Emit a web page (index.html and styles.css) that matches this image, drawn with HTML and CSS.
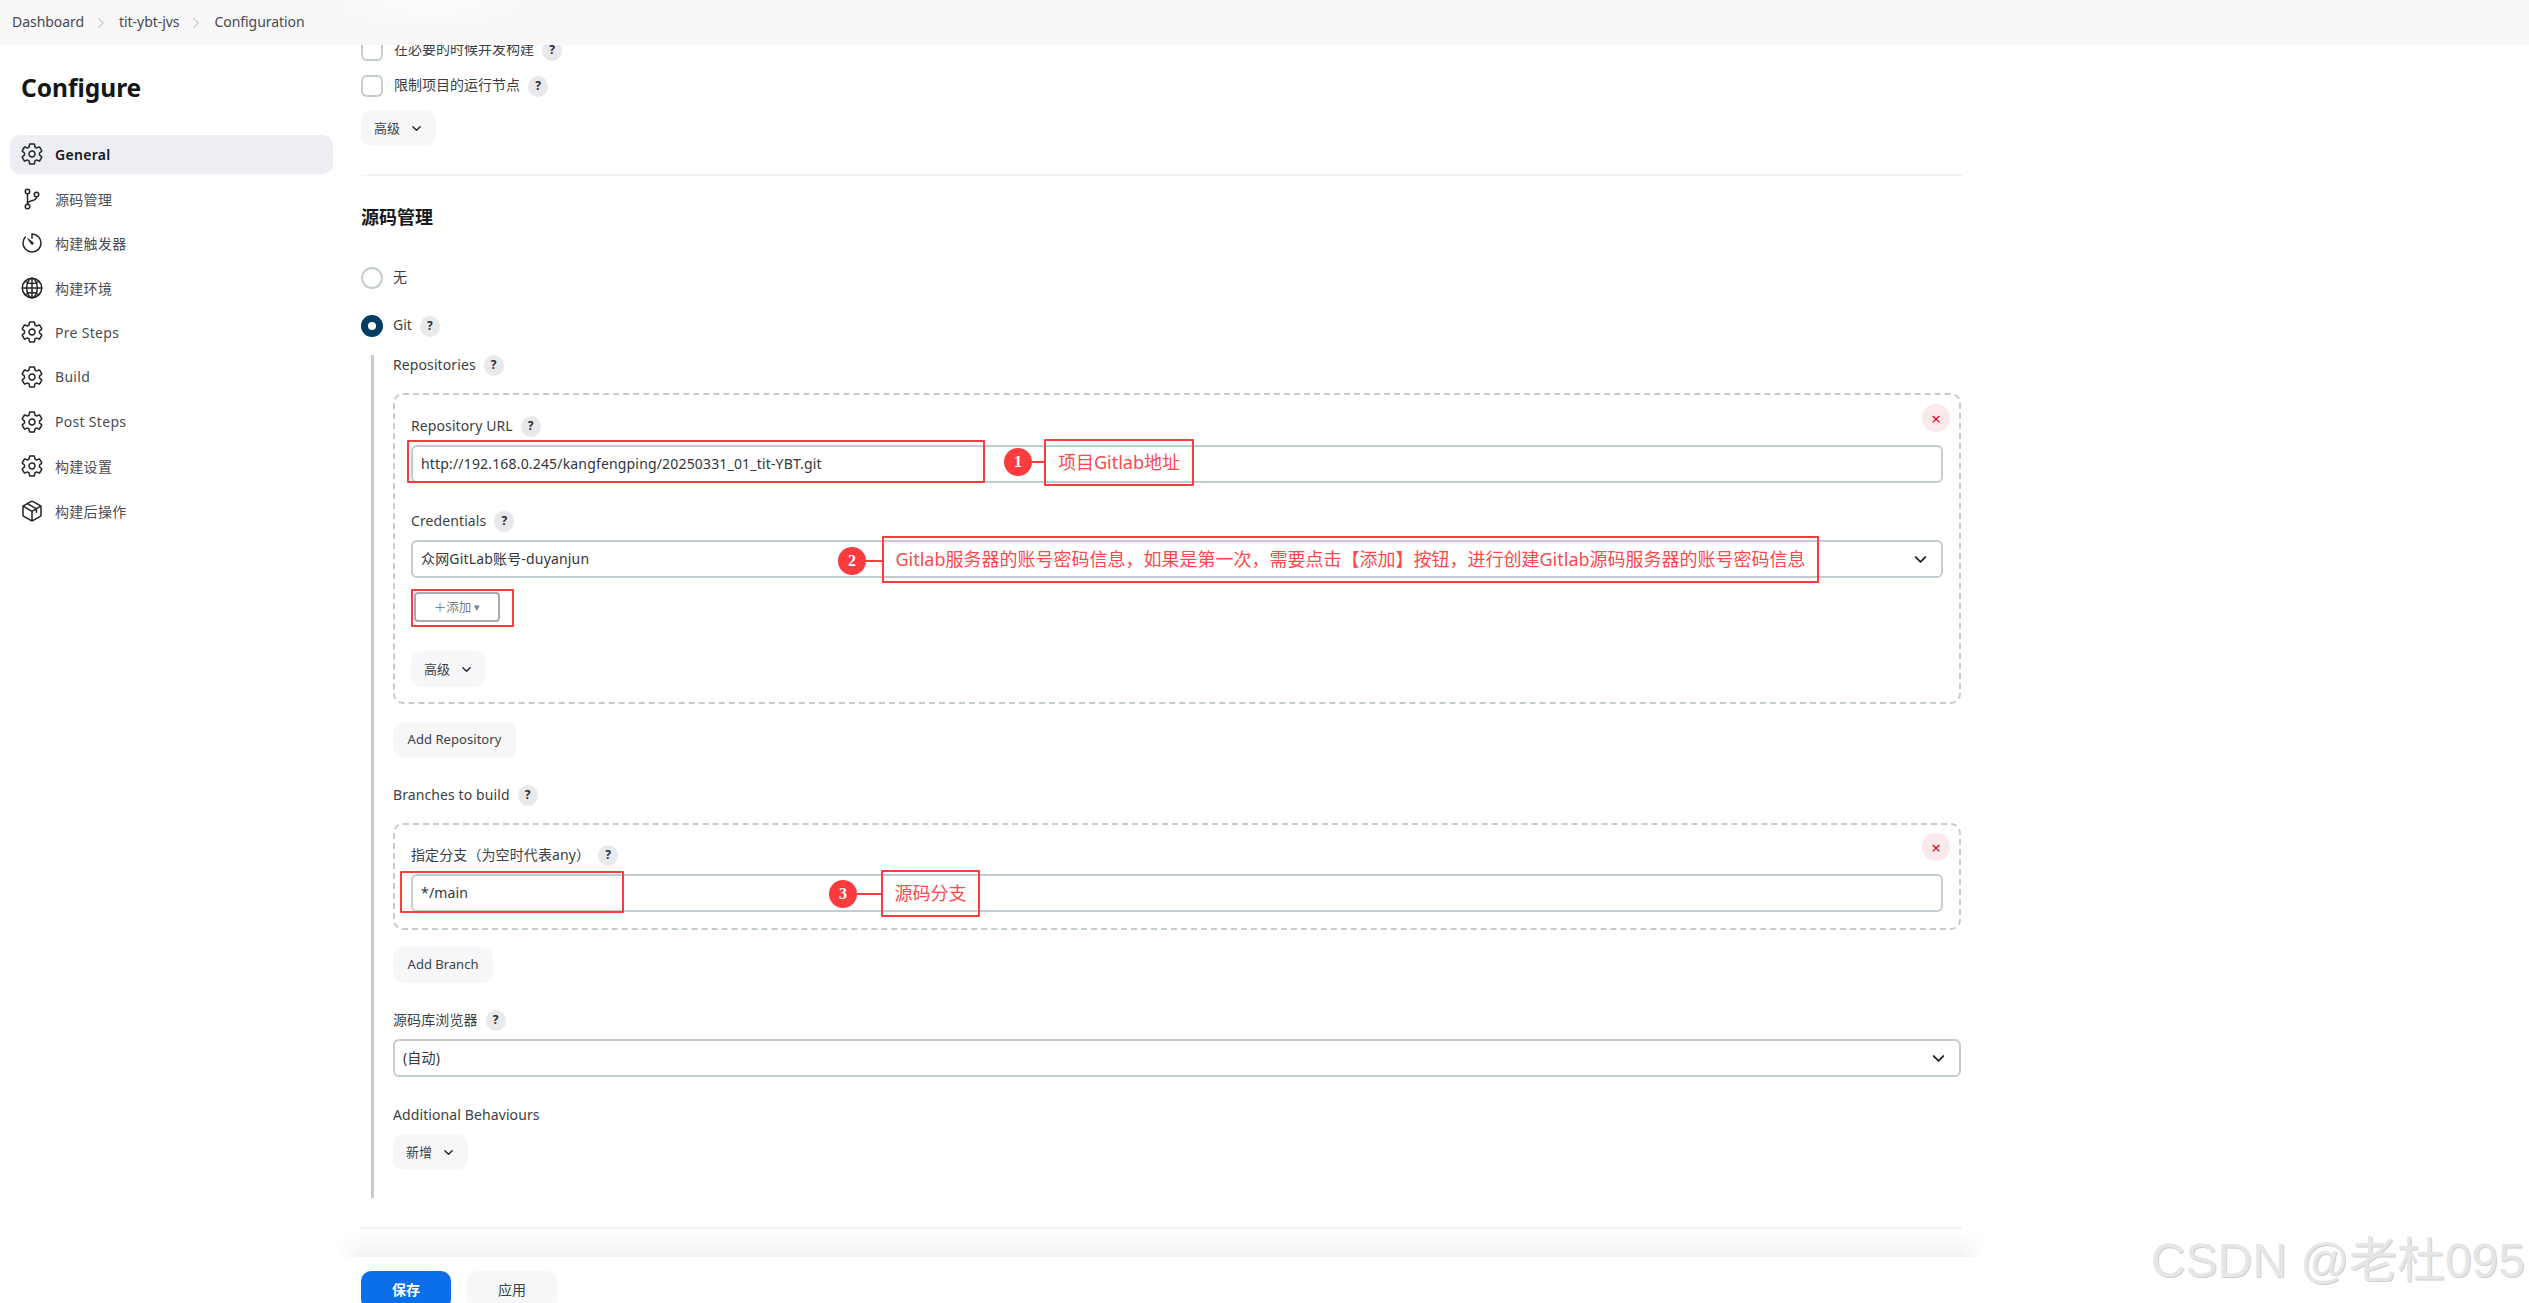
FILE: index.html
```html
<!DOCTYPE html>
<html lang="zh-CN">
<head>
<meta charset="utf-8">
<title>Configuration</title>
<link rel="stylesheet" href="styles.css">
</head>
<body>
<svg class="defs" aria-hidden="true">
  <symbol id="i-gear" viewBox="0 0 512 512"><path fill="none" stroke="currentColor" stroke-width="32" stroke-linecap="round" stroke-linejoin="round" d="M262.29 192.31a64 64 0 1057.4 57.4 64.13 64.13 0 00-57.4-57.4zM416.39 256a154.34 154.34 0 01-1.53 20.79l45.21 35.46a10.81 10.81 0 012.45 13.75l-42.77 74a10.81 10.81 0 01-13.14 4.59l-44.9-18.08a16.11 16.11 0 00-15.17 1.75A164.48 164.48 0 01325 400.8a15.94 15.94 0 00-8.82 12.14l-6.73 47.89a11.08 11.08 0 01-10.68 9.17h-85.54a11.11 11.11 0 01-10.69-8.87l-6.72-47.82a16.07 16.07 0 00-9-12.22 155.3 155.3 0 01-21.46-12.57 16 16 0 00-15.11-1.71l-44.89 18.07a10.81 10.81 0 01-13.14-4.58l-42.77-74a10.8 10.8 0 012.45-13.75l38.21-30a16.05 16.05 0 006-14.08c-.36-4.17-.58-8.33-.58-12.5s.21-8.27.58-12.35a16 16 0 00-6.07-13.94l-38.19-30A10.81 10.81 0 0149.48 186l42.77-74a10.81 10.81 0 0113.14-4.59l44.9 18.08a16.11 16.11 0 0015.17-1.75A164.48 164.48 0 01187 111.2a15.94 15.94 0 008.82-12.14l6.73-47.89A11.08 11.08 0 01213.23 42h85.54a11.11 11.11 0 0110.69 8.87l6.72 47.82a16.07 16.07 0 009 12.22 155.3 155.3 0 0121.46 12.57 16 16 0 0015.11 1.71l44.89-18.07a10.81 10.81 0 0113.14 4.58l42.77 74a10.8 10.8 0 01-2.45 13.75l-38.21 30a16.05 16.05 0 00-6.05 14.08c.33 4.14.55 8.3.55 12.47z"/></symbol>
  <symbol id="i-branch" viewBox="0 0 512 512"><g fill="none" stroke="currentColor" stroke-width="32" stroke-linecap="round" stroke-linejoin="round"><circle cx="160" cy="96" r="48"/><circle cx="160" cy="416" r="48"/><path d="M160 368V144"/><circle cx="352" cy="160" r="48"/><path d="M352 208c0 128-192 48-192 160"/></g></symbol>
  <symbol id="i-timer" viewBox="0 0 512 512"><path fill="none" stroke="currentColor" stroke-width="32" stroke-linecap="round" stroke-linejoin="round" d="M112.91 128A191.85 191.85 0 0064 254c-1.18 106.35 85.65 193.8 192 194 106.2.2 192-85.83 192-192 0-104.54-83.55-189.61-187.5-192a4.36 4.36 0 00-4.5 4.37V152"/><path fill="currentColor" d="M233.38 278.63l-79-113a8.13 8.13 0 0111.32-11.32l113 79a32.5 32.5 0 01-37 53.34 33.21 33.21 0 01-8.32-8.02z"/></symbol>
  <symbol id="i-globe" viewBox="0 0 512 512"><g fill="none" stroke="currentColor" stroke-width="32" stroke-linecap="round" stroke-linejoin="round"><path d="M256 48C141.13 48 48 141.13 48 256s93.13 208 208 208 208-93.13 208-208S370.87 48 256 48z"/><path d="M256 48c-58.07 0-112.67 92.47-112.67 208S197.93 464 256 464s112.67-92.47 112.67-208S314.07 48 256 48z"/><path d="M117.33 117.33c38.24 27.15 86.38 43.34 138.67 43.34s100.43-16.19 138.67-43.34M394.67 394.67c-38.24-27.15-86.38-43.34-138.67-43.34s-100.43 16.19-138.67 43.34M256 48v416M464 256H48"/></g></symbol>
  <symbol id="i-box" viewBox="0 0 512 512"><g fill="none" stroke="currentColor" stroke-width="32" stroke-linecap="round" stroke-linejoin="round"><path d="M448 341.37V170.61A32 32 0 00432.11 143l-152-88.46a47.94 47.94 0 00-48.24 0L79.89 143A32 32 0 0064 170.61v170.76A32 32 0 0079.89 369l152 88.46a48 48 0 0048.24 0l152-88.46A32 32 0 00448 341.37z"/><path d="M69 153.99l187 110 187-110M256 463.99v-200M160 97l190 112v72"/></g></symbol>
  <symbol id="i-chev" viewBox="0 0 512 512"><path fill="none" stroke="currentColor" stroke-width="56" stroke-linecap="round" stroke-linejoin="round" d="M112 184l144 144 144-144"/></symbol>
  <symbol id="i-bc" viewBox="0 0 512 512"><path fill="none" stroke="currentColor" stroke-width="26" stroke-linecap="round" stroke-linejoin="round" d="M184 112l144 144-144 144"/></symbol>
</svg>

<header class="topbar">
  <span class="crumb">Dashboard</span>
  <svg class="crumb-sep"><use href="#i-bc"/></svg>
  <span class="crumb">tit-ybt-jvs</span>
  <svg class="crumb-sep"><use href="#i-bc"/></svg>
  <span class="crumb">Configuration</span>
</header>

<div class="layout">
  <aside class="sidebar">
    <h1 class="title">Configure</h1>
    <nav class="nav">
      <a class="nav-item active"><svg class="nav-icon"><use href="#i-gear"/></svg><span>General</span></a>
      <a class="nav-item"><svg class="nav-icon"><use href="#i-branch"/></svg><span>源码管理</span></a>
      <a class="nav-item"><svg class="nav-icon"><use href="#i-timer"/></svg><span>构建触发器</span></a>
      <a class="nav-item"><svg class="nav-icon"><use href="#i-globe"/></svg><span>构建环境</span></a>
      <a class="nav-item"><svg class="nav-icon"><use href="#i-gear"/></svg><span>Pre Steps</span></a>
      <a class="nav-item"><svg class="nav-icon"><use href="#i-gear"/></svg><span>Build</span></a>
      <a class="nav-item"><svg class="nav-icon"><use href="#i-gear"/></svg><span>Post Steps</span></a>
      <a class="nav-item"><svg class="nav-icon"><use href="#i-gear"/></svg><span>构建设置</span></a>
      <a class="nav-item"><svg class="nav-icon"><use href="#i-box"/></svg><span>构建后操作</span></a>
    </nav>
  </aside>

  <main class="main">
    <div class="check-row"><span class="checkbox"></span><span class="label">在必要的时候并发构建</span><span class="help">?</span></div>
    <div class="check-row second"><span class="checkbox"></span><span class="label">限制项目的运行节点</span><span class="help">?</span></div>
    <button class="btn btn-menu adv-first">高级<svg class="chev"><use href="#i-chev"/></svg></button>
    <hr class="divider first-divider">
    <h2 class="section-title">源码管理</h2>

    <div class="radio-row none"><span class="radio"></span><span class="label">无</span></div>
    <div class="radio-row git"><span class="radio on"></span><span class="label">Git</span><span class="help">?</span></div>

    <div class="git-sub">
      <div class="field-label"><span>Repositories</span><span class="help">?</span></div>
      <div class="dashed repo-box">
        <span class="close repo-close">×</span>
        <div class="field-label"><span>Repository URL</span><span class="help">?</span></div>
        <div class="input gap-s">http://192.168.0.245/kangfengping/20250331_01_tit-YBT.git</div>
        <div class="field-label gap-l"><span>Credentials</span><span class="help">?</span></div>
        <div class="input select gap-s">众网GitLab账号-duyanjun<svg class="select-chev"><use href="#i-chev"/></svg></div>
        <button class="add-btn">＋添加 <span class="caret">▾</span></button>
        <button class="btn btn-menu adv-second">高级<svg class="chev"><use href="#i-chev"/></svg></button>
      </div>
      <button class="btn btn-plain add-repo">Add Repository</button>

      <div class="field-label branches-label"><span>Branches to build</span><span class="help">?</span></div>
      <div class="dashed branch-box">
        <span class="close branch-close">×</span>
        <div class="field-label"><span>指定分支（为空时代表any）</span><span class="help">?</span></div>
        <div class="input gap-s">*/main</div>
      </div>
      <button class="btn btn-plain add-branch">Add Branch</button>

      <div class="field-label gap-ll"><span>源码库浏览器</span><span class="help">?</span></div>
      <div class="input select browser">(自动)<svg class="select-chev"><use href="#i-chev"/></svg></div>
      <div class="field-label gap-l"><span>Additional Behaviours</span></div>
      <button class="btn btn-menu add-new">新增<svg class="chev"><use href="#i-chev"/></svg></button>
    </div>

    <hr class="divider last-divider">
    <div class="shade"></div>
    <footer class="actions">
      <button class="btn btn-save">保存</button>
      <button class="btn btn-apply">应用</button>
    </footer>
  </main>
</div>

<div class="notes">
  <div class="mark mark-url"></div>
  <span class="num num1">1</span><span class="tie tie1"></span>
  <div class="note note1">项目Gitlab地址</div>
  <span class="num num2">2</span><span class="tie tie2"></span>
  <div class="note note2">Gitlab服务器的账号密码信息，如果是第一次，需要点击【添加】按钮，进行创建Gitlab源码服务器的账号密码信息</div>
  <div class="mark mark-add"></div>
  <div class="mark mark-main"></div>
  <span class="num num3">3</span><span class="tie tie3"></span>
  <div class="note note3">源码分支</div>
</div>

<div class="watermark">CSDN @老杜095</div>
</body>
</html>
```

FILE: styles.css
```css
* { box-sizing: border-box; }
html, body { margin: 0; height: 1303px; overflow: hidden; background: #fff; }
body {
  position: relative;
  font-family: "Noto Sans", "Noto Sans CJK SC", sans-serif;
  font-size: 14px;
  color: #3c3f46;
}
.defs { position: absolute; width: 0; height: 0; }

.topbar {
  position: absolute; top: 0; left: 0; right: 0; z-index: 5;
  height: 45px;
  display: flex; align-items: center;
  padding: 0 0 0 12px;
  background: radial-gradient(ellipse 90px 24px at 430px 0, #fdfdfd, #f8f8f9 100%);
}
.crumb { font-size: 14px; line-height: 20px; color: #46494f; padding-bottom: 2px; letter-spacing: -.05px; }
.crumb-sep { width: 16px; height: 16px; margin: 0 10px 0 9px; color: #9a9ea6; }

.layout { display: flex; }
.sidebar { width: 361px; flex: none; padding: 71px 28px 0 10px; }
.title { margin: 0 0 22px 11px; font-size: 24.5px; line-height: 34px; font-weight: 700; color: #14161a; height: 42px; }
.nav { display: flex; flex-direction: column; }
.nav-item {
  height: 39px; margin-bottom: 5.6px;
  display: flex; align-items: center; gap: 11px;
  padding: 0 0 1px 10px; border-radius: 10px;
  color: #4a4d54; font-size: 14px; letter-spacing: .3px;
}
.nav-item.active { background: #edeef4; color: #14161a; font-weight: 600; }
.nav-icon { width: 24px; height: 24px; flex: none; color: #22252a; }

.main { width: 1601px; flex: none; padding-top: 39px; }
.check-row, .radio-row { display: flex; align-items: center; height: 22px; }
.check-row.second { margin-top: 14px; }
.checkbox { width: 22px; height: 22px; border: 2px solid #c3ccd1; border-radius: 6px; flex: none; }
.radio { width: 22px; height: 22px; border: 2px solid #c3ccd1; border-radius: 50%; flex: none; }
.radio.on { border: 7px solid #013d64; background: #fff; }
.label { margin-left: 11px; line-height: 20px; padding-bottom: 2px; }
.help {
  display: inline-flex; align-items: center; justify-content: center;
  width: 20px; height: 21px; margin-left: 8px; flex: none;
  border-radius: 50%; background: #e9e9eb; color: #2a2c30;
  font-size: 12px; font-weight: 700; line-height: 1;
}

.btn {
  display: flex; align-items: center; justify-content: center;
  border: 0; border-radius: 10px; height: 36px;
  font-family: inherit; font-size: 13px; color: #3c3f46;
  background: #f7f7f9; padding: 0 0 2px;
}
.btn-menu { width: 75px; gap: 10px; }
.chev { width: 13px; height: 13px; color: #22252a; margin-top: 2px; }
.adv-first { margin-top: 13px; }
.divider { border: 0; height: 2px; margin: 0; background: #f3f3f7; }
.first-divider { margin-top: 28px; }
.section-title { margin: 29px 0 0; height: 24px; font-size: 18px; line-height: 24px; font-weight: 700; color: #16181c; }
.radio-row.none { margin-top: 38px; }
.radio-row.git { margin-top: 26px; }
.radio-row .label { margin-left: 10px; }

.git-sub {
  margin: 18px 1px 0 10px;
  padding: 0 0 28px 19px;
  border-left: 3px solid #c3ccd1;
}
.field-label { display: flex; align-items: center; height: 20px; line-height: 20px; letter-spacing: .1px; }
.field-label > span:first-child { padding-bottom: 1px; }
.gap-s { margin-top: 9px; }
.gap-l { margin-top: 28px; }
.gap-ll { margin-top: 27px; }
.branches-label { margin-top: 27px; }
.dashed { position: relative; border: 2px dashed #c3ccd1; border-radius: 10px; padding: 21px 16px 15px; }
.repo-box { margin-top: 18px; }
.branch-box { margin-top: 18px; padding: 20px 16px 16px; }
.close {
  position: absolute; right: 9px;
  width: 28px; height: 28px; border-radius: 50%;
  display: flex; align-items: center; justify-content: center;
  background: #f9e9eb; color: #e6002c; font-size: 17px; line-height: 1;
}
.repo-close { top: 9px; }
.branch-close { top: 8px; }
.input {
  position: relative;
  height: 38px; border: 2px solid #c3ccd1; border-radius: 6px;
  display: flex; align-items: center; padding: 0 0 2px 8px;
  background: #fff; color: #33363c; font-size: 14px; letter-spacing: .17px;
}
.select-chev { position: absolute; right: 12px; top: 9px; width: 17px; height: 17px; color: #22252a; }
.add-btn {
  display: flex; align-items: center; justify-content: center; gap: 3px;
  width: 86px; height: 30px; margin: 14px 0 0 3px; padding: 0 0 1px;
  border: 2px solid #a5abb3; border-radius: 4px; background: #fff;
  font-family: inherit; font-size: 12.5px; color: #7b7f87;
}
.caret { font-size: 11px; }
.adv-second { margin-top: 29px; }
.add-repo { width: 123px; margin-top: 18px; letter-spacing: .05px; }
.add-branch { width: 100px; margin-top: 17px; }
.browser { margin-top: 9px; }
.add-new { margin-top: 9px; }
.last-divider { margin-top: 29px; }
.shade {
  height: 28px; margin: 0 -24px;
  background: linear-gradient(#fff, #f3f3f4);
  -webkit-mask-image: linear-gradient(to right, transparent, #000 26px, #000 calc(100% - 26px), transparent);
  mask-image: linear-gradient(to right, transparent, #000 26px, #000 calc(100% - 26px), transparent);
}
.actions { display: flex; gap: 16px; margin-top: 14px; }
.btn-save { width: 90px; height: 38px; background: #0a6fe8; color: #fff; font-weight: 700; font-size: 14px; }
.btn-apply { width: 90px; height: 38px; font-size: 14px; }

.notes { position: absolute; inset: 0; z-index: 6; pointer-events: none; }
.mark, .note { position: absolute; border: 2px solid #fb3c3f; border-radius: 1px; }
.mark-url { left: 407px; top: 440px; width: 578px; height: 43px; }
.mark-add { left: 411px; top: 589px; width: 103px; height: 38px; }
.mark-main { left: 400px; top: 871px; width: 224px; height: 42px; }
.note {
  display: flex; align-items: center; justify-content: center;
  color: #fb4a4d; font-size: 18px; line-height: 24px; white-space: nowrap; background: transparent;
  padding-bottom: 2px;
}
.note1 { left: 1044px; top: 439px; width: 150px; height: 47px; }
.note2 { left: 882px; top: 536px; width: 937px; height: 47px; }
.note3 { left: 881px; top: 870px; width: 99px; height: 47px; }
.num {
  position: absolute; width: 28px; height: 28px; border-radius: 50%;
  display: flex; align-items: center; justify-content: center;
  background: #fb3c3f; color: #fff;
  font-family: "Liberation Serif", serif; font-weight: 700; font-size: 16px;
}
.tie { position: absolute; height: 2px; background: #fb3c3f; }
.num1 { left: 1004px; top: 448px; }
.tie1 { left: 1032px; top: 461px; width: 12px; }
.num2 { left: 838px; top: 547px; }
.tie2 { left: 866px; top: 560px; width: 16px; }
.num3 { left: 829px; top: 880px; }
.tie3 { left: 857px; top: 893px; width: 24px; }

.watermark {
  position: absolute; right: 4px; top: 1235px; z-index: 7;
  font-family: "Liberation Sans", "Noto Sans CJK SC", sans-serif;
  font-size: 48px; line-height: 52px; white-space: nowrap;
  color: #e6e6e6; text-shadow: 1px 1px 0 #cfcfcf;
}
```
